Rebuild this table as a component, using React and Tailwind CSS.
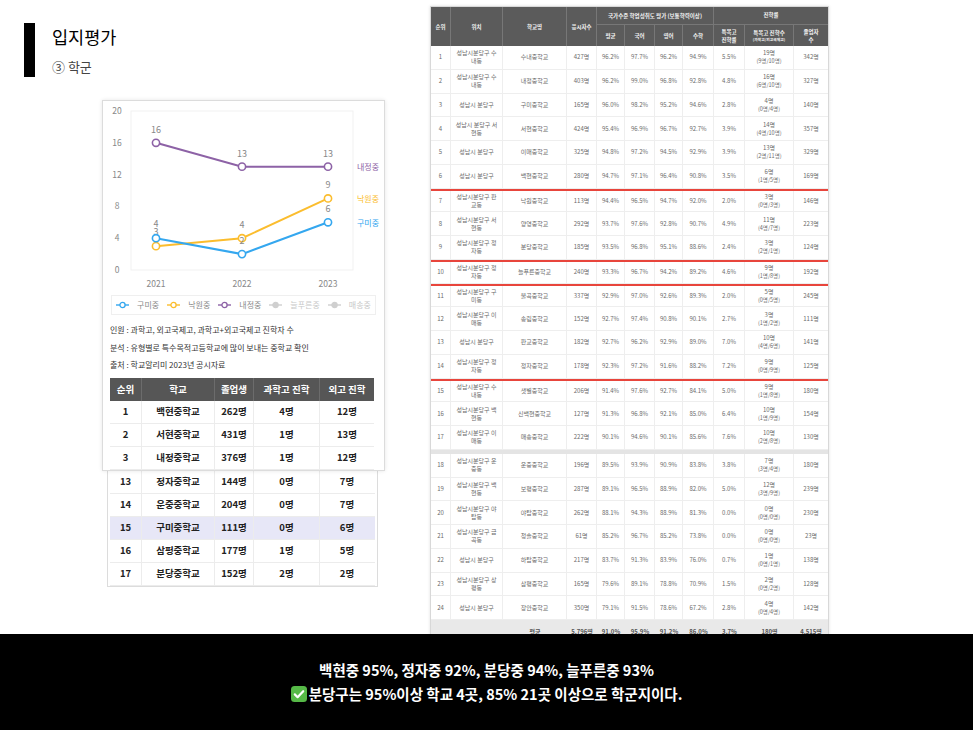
import React from 'react';

// 분당구 중학교 학업성취도 / 진학률
const schools = [
    { no: 1, loc: ['성남시분당구 수', '내동'], name: '수내중학교', n: '427명', avg: '96.2%', kor: '97.7%', eng: '96.2%', math: '94.9%', rate: '5.5%', cnt: '19명', sub: '(9명/10명)', grad: '342명' },
    { no: 2, loc: ['성남시분당구 수', '내동'], name: '내정중학교', n: '403명', avg: '96.2%', kor: '99.0%', eng: '96.8%', math: '92.8%', rate: '4.8%', cnt: '16명', sub: '(6명/10명)', grad: '327명' },
    { no: 3, loc: ['성남시 분당구'], name: '구미중학교', n: '165명', avg: '96.0%', kor: '98.2%', eng: '95.2%', math: '94.6%', rate: '2.8%', cnt: '4명', sub: '(0명/4명)', grad: '140명' },
    { no: 4, loc: ['성남시 분당구 서', '현동'], name: '서현중학교', n: '424명', avg: '95.4%', kor: '96.9%', eng: '96.7%', math: '92.7%', rate: '3.9%', cnt: '14명', sub: '(4명/10명)', grad: '357명' },
    { no: 5, loc: ['성남시 분당구'], name: '이매중학교', n: '325명', avg: '94.8%', kor: '97.2%', eng: '94.5%', math: '92.9%', rate: '3.9%', cnt: '13명', sub: '(2명/11명)', grad: '329명' },
    { no: 6, loc: ['성남시 분당구'], name: '백현중학교', n: '280명', avg: '94.7%', kor: '97.1%', eng: '96.4%', math: '90.8%', rate: '3.5%', cnt: '6명', sub: '(1명/5명)', grad: '169명' },
    { no: 7, loc: ['성남시분당구 판', '교동'], name: '낙원중학교', n: '113명', avg: '94.4%', kor: '96.5%', eng: '94.7%', math: '92.0%', rate: '2.0%', cnt: '3명', sub: '(0명/3명)', grad: '146명', red: true },
    { no: 8, loc: ['성남시분당구 서', '현동'], name: '양영중학교', n: '292명', avg: '93.7%', kor: '97.6%', eng: '92.8%', math: '90.7%', rate: '4.9%', cnt: '11명', sub: '(4명/7명)', grad: '223명' },
    { no: 9, loc: ['성남시분당구 정', '자동'], name: '분당중학교', n: '185명', avg: '93.5%', kor: '96.8%', eng: '95.1%', math: '88.6%', rate: '2.4%', cnt: '3명', sub: '(2명/1명)', grad: '124명' },
    { no: 10, loc: ['성남시분당구 정', '자동'], name: '늘푸른중학교', n: '240명', avg: '93.3%', kor: '96.7%', eng: '94.2%', math: '89.2%', rate: '4.6%', cnt: '9명', sub: '(1명/8명)', grad: '192명', red: true },
    { no: 11, loc: ['성남시분당구 구', '미동'], name: '불곡중학교', n: '337명', avg: '92.9%', kor: '97.0%', eng: '92.6%', math: '89.3%', rate: '2.0%', cnt: '5명', sub: '(0명/5명)', grad: '245명', red: true },
    { no: 12, loc: ['성남시분당구 이', '매동'], name: '송림중학교', n: '152명', avg: '92.7%', kor: '97.4%', eng: '90.8%', math: '90.1%', rate: '2.7%', cnt: '3명', sub: '(1명/2명)', grad: '111명' },
    { no: 13, loc: ['성남시 분당구'], name: '판교중학교', n: '182명', avg: '92.7%', kor: '96.2%', eng: '92.9%', math: '89.0%', rate: '7.0%', cnt: '10명', sub: '(4명/6명)', grad: '141명' },
    { no: 14, loc: ['성남시분당구 정', '자동'], name: '정자중학교', n: '178명', avg: '92.3%', kor: '97.2%', eng: '91.6%', math: '88.2%', rate: '7.2%', cnt: '9명', sub: '(0명/9명)', grad: '125명' },
    { no: 15, loc: ['성남시분당구 수', '내동'], name: '샛별중학교', n: '206명', avg: '91.4%', kor: '97.6%', eng: '92.7%', math: '84.1%', rate: '5.0%', cnt: '9명', sub: '(1명/8명)', grad: '180명', red: true },
    { no: 16, loc: ['성남시분당구 백', '현동'], name: '신백현중학교', n: '127명', avg: '91.3%', kor: '96.8%', eng: '92.1%', math: '85.0%', rate: '6.4%', cnt: '10명', sub: '(1명/9명)', grad: '154명' },
    { no: 17, loc: ['성남시분당구 이', '매동'], name: '매송중학교', n: '222명', avg: '90.1%', kor: '94.6%', eng: '90.1%', math: '85.6%', rate: '7.6%', cnt: '10명', sub: '(2명/8명)', grad: '130명' },
    { no: 18, loc: ['성남시분당구 운', '중동'], name: '운중중학교', n: '196명', avg: '89.5%', kor: '93.9%', eng: '90.9%', math: '83.8%', rate: '3.8%', cnt: '7명', sub: '(3명/4명)', grad: '180명', gap: true },
    { no: 19, loc: ['성남시분당구 백', '현동'], name: '보평중학교', n: '287명', avg: '89.1%', kor: '96.5%', eng: '88.9%', math: '82.0%', rate: '5.0%', cnt: '12명', sub: '(3명/9명)', grad: '239명' },
    { no: 20, loc: ['성남시분당구 야', '탑동'], name: '야탑중학교', n: '262명', avg: '88.1%', kor: '94.3%', eng: '88.9%', math: '81.3%', rate: '0.0%', cnt: '0명', sub: '(0명/0명)', grad: '230명' },
    { no: 21, loc: ['성남시분당구 금', '곡동'], name: '청솔중학교', n: '61명', avg: '85.2%', kor: '96.7%', eng: '85.2%', math: '73.8%', rate: '0.0%', cnt: '0명', sub: '(0명/0명)', grad: '23명' },
    { no: 22, loc: ['성남시 분당구'], name: '하탑중학교', n: '217명', avg: '83.7%', kor: '91.3%', eng: '83.9%', math: '76.0%', rate: '0.7%', cnt: '1명', sub: '(0명/1명)', grad: '138명' },
    { no: 23, loc: ['성남시분당구 상', '평동'], name: '삼평중학교', n: '165명', avg: '79.6%', kor: '89.1%', eng: '78.8%', math: '70.9%', rate: '1.5%', cnt: '2명', sub: '(0명/2명)', grad: '128명' },
    { no: 24, loc: ['성남시 분당구'], name: '장안중학교', n: '350명', avg: '79.1%', kor: '91.5%', eng: '78.6%', math: '67.2%', rate: '2.8%', cnt: '4명', sub: '(0명/4명)', grad: '142명' },
];

const ranking = [
    { no: 1, name: '백현중학교', grad: '262명', sci: '4명', fl: '12명' },
    { no: 2, name: '서현중학교', grad: '431명', sci: '1명', fl: '13명' },
    { no: 3, name: '내정중학교', grad: '376명', sci: '1명', fl: '12명' },
];

const rankingMore = [
    { no: 13, name: '정자중학교', grad: '144명', sci: '0명', fl: '7명' },
    { no: 14, name: '운중중학교', grad: '204명', sci: '0명', fl: '7명' },
    { no: 15, name: '구미중학교', grad: '111명', sci: '0명', fl: '6명', hl: true },
    { no: 16, name: '삼평중학교', grad: '177명', sci: '1명', fl: '5명' },
    { no: 17, name: '분당중학교', grad: '152명', sci: '2명', fl: '2명' },
];

const cols = 'grid grid-cols-[20px_52px_64px_30px_28px_30px_28px_31px_31px_49px_34px]';
const rankCols = 'grid grid-cols-[32px_73px_39px_66px_54px]';

const X = [53, 139, 225];
const yv = (v) => 169 - 7.95 * v;

const series = [
    { name: '내정중', color: '#8d62a6', vals: [16, 13, 13], labelDy: [-10, -10, -10], tag: 69 },
    { name: '낙원중', color: '#fbbd2e', vals: [3, 4, 9], labelDy: [-11, -10, -10], tag: 101 },
    { name: '구미중', color: '#34a7ef', vals: [4, 2, 6], labelDy: [-11, -10, -10], tag: 125 },
];

const LineChart = () => (
    <svg width="281" height="190" className="block" fontFamily="'Noto Sans CJK KR', 'Liberation Sans', sans-serif">
        <rect x="28" y="10" width="222" height="159" fill="#fff" stroke="#f1f1f1" />
        {[0, 4, 8, 12, 16, 20].map(v => (
            <text key={v} x="14" y={yv(v) + 3} textAnchor="middle" fontSize="8.5" fill="#888">{v}</text>
        ))}
        {['2021', '2022', '2023'].map((y, i) => (
            <text key={y} x={X[i]} y="186" textAnchor="middle" fontSize="8.5" fill="#888">{y}</text>
        ))}
        {series.map(s => (
            <g key={s.name}>
                <polyline points={s.vals.map((v, i) => `${X[i]},${yv(v)}`).join(' ')} fill="none" stroke={s.color} strokeWidth="2" />
                {s.vals.map((v, i) => (
                    <circle key={i} cx={X[i]} cy={yv(v)} r="3.6" fill="#fff" stroke={s.color} strokeWidth="1.6" />
                ))}
                {s.vals.map((v, i) => (
                    <text key={'t' + i} x={X[i]} y={yv(v) + s.labelDy[i]} textAnchor="middle" fontSize="9" fill="#888">{v}</text>
                ))}
                <text x="254" y={s.tag} fontSize="8" fill={s.color}>{s.name}</text>
            </g>
        ))}
    </svg>
);

const LegendItem = ({ color, label, filled, dim }) => (
    <div className="flex items-center gap-[8px]">
        <svg width="13" height="8">
            <line x1="0" y1="4" x2="13" y2="4" stroke={color} strokeWidth="1.4" />
            <circle cx="6.5" cy="4" r="2.6" fill={filled ? color : '#fff'} stroke={color} strokeWidth="1.3" />
        </svg>
        <span className={dim ? 'text-[#c8c8c8]' : 'text-[#8a8a8a]'}>{label}</span>
    </div>
);

const RankRow = ({ r }) => (
    <div className={`${rankCols} h-[23px] border-b border-[#ececec] text-[9.5px] font-bold text-[#222] ${r.hl ? 'bg-[#e7e7f7]' : 'bg-white'}`}>
        <div className="flex items-center justify-center border-r border-[#ececec]">{r.no}</div>
        <div className="flex items-center justify-center border-r border-[#ececec]">{r.name}</div>
        <div className="flex items-center justify-center border-r border-[#ececec]">{r.grad}</div>
        <div className="flex items-center justify-center border-r border-[#ececec]">{r.sci}</div>
        <div className="flex items-center justify-center">{r.fl}</div>
    </div>
);

const SchoolRow = ({ s }) => {
    const cell = 'flex flex-col items-center justify-center text-center border-r border-[#eeeeee]';
    return (
        <div className={`${cols} h-[23.75px] bg-white text-[6px] text-[#6a6a6a] leading-[8px] ${s.red ? 'border-t-2 border-t-[#e8453c]' : ''} border-b border-b-[#eeeeee]`}>
            <div className={cell}>{s.no}</div>
            <div className={cell}>{s.loc.map(l => <span key={l}>{l}</span>)}</div>
            <div className={cell}>{s.name}</div>
            <div className={cell}>{s.n}</div>
            <div className={cell}>{s.avg}</div>
            <div className={cell}>{s.kor}</div>
            <div className={cell}>{s.eng}</div>
            <div className={cell}>{s.math}</div>
            <div className={cell}>{s.rate}</div>
            <div className={cell}><span>{s.cnt}</span><span className="text-[5.5px]">{s.sub}</span></div>
            <div className="flex items-center justify-center">{s.grad}</div>
        </div>
    );
};

const SchoolTable = () => {
    const h = 'flex flex-col items-center justify-center text-center border-r border-[#777] leading-[8px]';
    return (
        <div className="w-[399px] border border-[#d8d8d8] shadow-[0_0_3px_rgba(0,0,0,0.12)]">
            <div className={`${cols} grid-rows-[18px_21px] bg-[#5b5b5b] text-[#f2f2f2] text-[5.5px] font-bold`}>
                <div className={`${h} row-span-2`}>순위</div>
                <div className={`${h} row-span-2`}>위치</div>
                <div className={`${h} row-span-2`}>학교명</div>
                <div className={`${h} row-span-2`}>응시자수</div>
                <div className={`${h} col-span-4 border-b`}>국가수준 학업성취도 평가 (보통학력이상)</div>
                <div className="col-span-3 flex items-center justify-center border-b border-[#777]">진학률</div>
                <div className={h}>평균</div>
                <div className={h}>국어</div>
                <div className={h}>영어</div>
                <div className={h}>수학</div>
                <div className={h}><span>특목고</span><span>진학률</span></div>
                <div className={h}><span>특목고 진학수</span><span className="text-[3.8px] leading-[6px]">(과학고/외고국제고)</span></div>
                <div className="flex flex-col items-center justify-center leading-[8px]"><span>졸업자</span><span>수</span></div>
            </div>
            {schools.map(s => (
                <React.Fragment key={s.no}>
                    {s.gap && <div className="h-[4px] bg-[#e4e4e4]" />}
                    <SchoolRow s={s} />
                </React.Fragment>
            ))}
            <div className={`${cols} h-[22px] bg-[#e9e9e9] text-[6px] font-bold text-[#555]`}>
                <div />
                <div />
                <div className="flex items-center justify-center">평균</div>
                <div className="flex items-center justify-center">5,796명</div>
                <div className="flex items-center justify-center">91.0%</div>
                <div className="flex items-center justify-center">95.9%</div>
                <div className="flex items-center justify-center">91.2%</div>
                <div className="flex items-center justify-center">86.0%</div>
                <div className="flex items-center justify-center">3.7%</div>
                <div className="flex items-center justify-center">180명</div>
                <div className="flex items-center justify-center">4,515명</div>
            </div>
        </div>
    );
};

export default function App() {
    return (
        <div className="w-[973px] h-[730px] overflow-hidden bg-white font-['Noto_Sans_CJK_KR','Noto_Sans',sans-serif]">
            <div className="flex h-[634px] overflow-hidden">
                <div className="w-[430px] shrink-0">
                    {/* 제목 */}
                    <div className="flex gap-[17px] pl-[24px] pt-[23px]">
                        <div className="w-[11px] h-[54px] bg-black" />
                        <div>
                            <div className="text-[17.5px] leading-[28px] text-black">입지평가</div>
                            <div className="mt-[6px] text-[13px] leading-[20px] text-[#444]">③ 학군</div>
                        </div>
                    </div>

                    <div className="ml-[102px] mt-[23px]">
                        <div className="relative z-10 w-[283px] border border-[#dcdcdc] bg-white shadow-[0_0_4px_rgba(0,0,0,0.1)]">
                            <LineChart />
                            <div className="mx-[8px] mt-[4px] flex h-[20px] items-center justify-center gap-[8px] border border-[#efefef] text-[8px]">
                                <LegendItem color="#34a7ef" label="구미중" />
                                <LegendItem color="#fbbd2e" label="낙원중" />
                                <LegendItem color="#8d62a6" label="내정중" />
                                <LegendItem color="#cfcfcf" label="늘푸른중" filled dim />
                                <LegendItem color="#cfcfcf" label="매송중" filled dim />
                            </div>
                            <div className="ml-[7px] mt-[6px] text-[8px] leading-[17.5px] text-[#333]">
                                <p>인원 : 과학고, 외고국제고, 과학고+외고국제고 진학자 수</p>
                                <p>분석 : 유형별로 특수목적고등학교에 많이 보내는 중학교 확인</p>
                                <p>출처 : 학교알리미 2023년 공시자료</p>
                            </div>
                            <div className="mx-[7px] mt-[4px] w-[264px]">
                                <div className={`${rankCols} h-[23px] bg-[#565656] text-[9.5px] font-bold text-white`}>
                                    <div className="flex items-center justify-center border-r border-[#6c6c6c]">순위</div>
                                    <div className="flex items-center justify-center border-r border-[#6c6c6c]">학교</div>
                                    <div className="flex items-center justify-center border-r border-[#6c6c6c]">졸업생</div>
                                    <div className="flex items-center justify-center border-r border-[#6c6c6c]">과학고 진학</div>
                                    <div className="flex items-center justify-center">외고 진학</div>
                                </div>
                                {ranking.map(r => <RankRow key={r.no} r={r} />)}
                            </div>
                        </div>
                        <div className="ml-[5px] w-[271px] border border-t-0 border-[#dcdcdc] bg-white px-[2px]">
                            {rankingMore.map(r => <RankRow key={r.no} r={r} />)}
                        </div>
                    </div>
                </div>

                <div className="pt-[6px]">
                    <SchoolTable />
                </div>
            </div>

            <div className="flex h-[96px] flex-col items-center justify-center bg-black text-[14.5px] font-bold leading-[24px] text-white">
                <p>백현중 95%, 정자중 92%, 분당중 94%, 늘푸른중 93%</p>
                <p className="flex items-center gap-[2px]">
                    <svg width="16" height="16" viewBox="0 0 16 16">
                        <rect width="16" height="16" rx="3.5" fill="#56b947" />
                        <path d="M3.8 8.4l2.8 2.8L12.2 5.2" fill="none" stroke="#fff" strokeWidth="2.2" strokeLinecap="round" strokeLinejoin="round" />
                    </svg>
                    <span>분당구는 95%이상 학교 4곳, 85% 21곳 이상으로 학군지이다.</span>
                </p>
            </div>
        </div>
    );
}
